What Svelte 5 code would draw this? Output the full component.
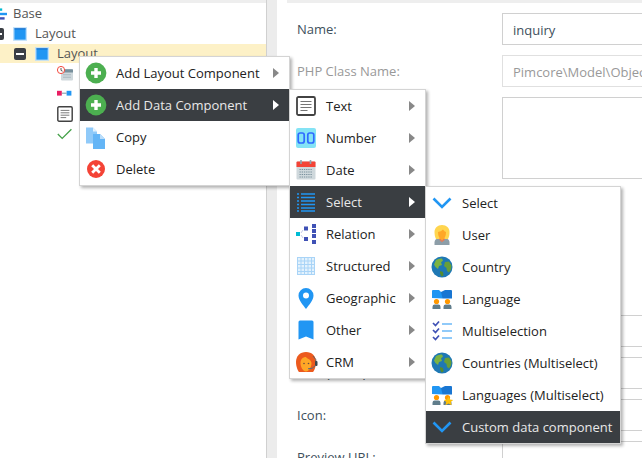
<script>
  const menu1 = [
    { icon: 'plus', label: 'Add Layout Component', arrow: true },
    { icon: 'plus', label: 'Add Data Component', arrow: true, active: true },
    { icon: 'copy', label: 'Copy' },
    { icon: 'delete', label: 'Delete' }
  ];
  const menu2 = [
    { icon: 'text', label: 'Text', arrow: true },
    { icon: 'number', label: 'Number', arrow: true },
    { icon: 'date', label: 'Date', arrow: true },
    { icon: 'list', label: 'Select', arrow: true, active: true },
    { icon: 'relation', label: 'Relation', arrow: true },
    { icon: 'grid', label: 'Structured', arrow: true },
    { icon: 'pin', label: 'Geographic', arrow: true },
    { icon: 'bookmark', label: 'Other', arrow: true },
    { icon: 'crm', label: 'CRM', arrow: true }
  ];
  const menu3 = [
    { icon: 'chevron', label: 'Select' },
    { icon: 'user', label: 'User' },
    { icon: 'globe', label: 'Country' },
    { icon: 'language', label: 'Language' },
    { icon: 'multi', label: 'Multiselection' },
    { icon: 'globe', label: 'Countries (Multiselect)' },
    { icon: 'languages', label: 'Languages (Multiselect)' },
    { icon: 'chevron', label: 'Custom data component', active: true }
  ];
  const tree = [
    { depth: 0, icon: 'base', label: 'Base' },
    { depth: 1, icon: 'square', label: 'Layout', open: true },
    { depth: 2, icon: 'square', label: 'Layout', open: true, selected: true },
    { depth: 3, icon: 'dateClock' },
    { depth: 3, icon: 'relationSmall' },
    { depth: 3, icon: 'text' },
    { depth: 3, icon: 'check' }
  ];
  const fields = [
    { label: '', narrow: true },
    { label: '', narrow: true },
    { label: '', narrow: true },
    { label: '' },
    { label: 'Title (Short):' },
    { label: 'Icon:' },
    { label: 'Preview URL:' }
  ];
</script>

{#snippet person(x, y, body, star)}
  <circle cx={x} cy={y} r="2.6" fill="#ff9800" />
  <path d="M{x - 4} {y + 7.5}v-2.2q0-2.2 2.2-2.2h3.6q2.2 0 2.2 2.2v2.2z" fill={body} />
  {#if star}
    <path d="M{x + 1} {y - 1}l1.5 3 3.2.4-2.4 2.2.7 3.2-3-1.7-3 1.7.7-3.2-2.4-2.2 3.2-.4z" fill="#ffc107" />
  {/if}
{/snippet}

{#snippet icon(name)}
  <svg class="ico" viewBox="0 0 20 20" width="20" height="20" aria-hidden="true">
    {#if name === 'plus'}
      <circle cx="10" cy="10" r="10.4" fill="#4caf50" />
      <path d="M10 5v10M5 10h10" stroke="#fff" stroke-width="3.4" />
    {:else if name === 'copy'}
      <path d="M0 .5h7l4 4v12H0z" fill="#90caf9" />
      <path d="M7 .5l4 4H7z" fill="#e3f2fd" />
      <path d="M7 7h7l5 5v10H7z" fill="#64b5f6" />
      <path d="M14 7l5 5h-5z" fill="#bbdefb" />
    {:else if name === 'delete'}
      <circle cx="10" cy="10" r="9" fill="#f44336" />
      <path d="M6.2 6.2l7.6 7.6M13.8 6.2l-7.6 7.6" stroke="#fff" stroke-width="2.8" />
    {:else if name === 'text'}
      <rect x="1" y="1" width="18" height="18" rx="1.5" fill="#fff" stroke="#424242" stroke-width="1.8" />
      <path d="M4.5 5.5h11M4.5 8.5h11M4.5 11.500h11M4.5 14.500h7" stroke="#757575" stroke-width="1.2" />
    {:else if name === 'number'}
      <rect x="0" y="0" width="20" height="20" rx="2" fill="#84e3f5" />
      <rect x="2.200" y="5" width="6" height="10" rx="2" fill="none" stroke="#2f6bff" stroke-width="1.700" />
      <rect x="11.800" y="5" width="6" height="10" rx="2" fill="none" stroke="#2f6bff" stroke-width="1.700" />
    {:else if name === 'date'}
      <rect x="0.5" y="1.5" width="19" height="18" rx="1" fill="#cfd8dc" />
      <path d="M.5 7V2.500q0-1 1-1h17q1 0 1 1V7z" fill="#f44336" />
      <path d="M5 0v4M14.500 0v4" stroke="#90a4ae" stroke-width="1.6" />
      <path d="M3.500 9.500h13M3.500 12h13M3.500 14.500h13M3.500 17h13" stroke="#78909c" stroke-width="1.2" stroke-dasharray="1.300 .9" />
    {:else if name === 'dateClock'}
      <rect x="5" y="4" width="15" height="14" rx="1" fill="#cfd8dc" />
      <path d="M5 8V5q0-1 1-1h13q1 0 1 1v3z" fill="#78909c" />
      <path d="M8 11h10M8 14h10" stroke="#90a4ae" stroke-width="1.300" stroke-dasharray="1.500 1" />
      <circle cx="5" cy="5" r="4.500" fill="#fff" stroke="#f44336" stroke-width="1.200" />
      <path d="M5 2.500V5.500l2 1" fill="none" stroke="#424242" stroke-width="1.100" />
    {:else if name === 'list'}
      <path d="M1 2h2M1 5.500h2M1 9h2M1 12.500h2M1 16h2M1 19h2" stroke="#2196f3" stroke-width="1.500" />
      <path d="M5 2h14M5 5.500h14M5 9h14M5 12.500h14M5 16h14M5 19h14" stroke="#2196f3" stroke-width="1.500" />
    {:else if name === 'relation'}
      <rect x="0" y="8" width="4" height="4" fill="#00bcd4" />
      <rect x="8" y="2.500" width="4" height="4" fill="#3f51b5" />
      <rect x="8" y="13" width="4" height="4" fill="#3f51b5" />
      <rect x="16" y="0" width="4" height="4" fill="#3f51b5" />
      <rect x="16" y="5" width="4" height="4" fill="#3f51b5" />
      <rect x="16" y="10" width="4" height="4" fill="#3f51b5" />
      <rect x="16" y="16" width="4" height="4" fill="#3f51b5" />
      <path d="M5 9l2-3M5 11l2 3" stroke="#c5cae9" stroke-width="1" />
    {:else if name === 'relationSmall'}
      <rect x="0" y="6" width="6" height="6" fill="#e91e63" />
      <rect x="12" y="6" width="6" height="6" fill="#2196f3" />
      <path d="M6 9h6" stroke="#78909c" stroke-width="1.200" />
    {:else if name === 'grid'}
      <rect x="1" y="1" width="18" height="18" fill="#e3f2fd" />
      <path d="M1.500 1v18M5 1v18M8.500 1v18M12 1v18M15.500 1v18M18.500 1v18M1 1.500h18M1 5h18M1 8.500h18M1 12h18M1 15.500h18M1 18.500h18" stroke="#a9d4f7" stroke-width="1" />
    {:else if name === 'pin'}
      <path d="M10 0a7.500 7.500 0 0 0-7.500 7.500C2.500 12 7 17 10 21c3-4 7.500-9 7.500-13.500A7.500 7.500 0 0 0 10 0z" fill="#2196f3" />
      <circle cx="10" cy="7.500" r="3" fill="#fff" />
    {:else if name === 'bookmark'}
      <path d="M4 0h12q1.500 0 1.500 1.500V19l-7.500-3-7.500 3V1.500Q2.500 0 4 0z" fill="#2196f3" transform="translate(0 .5)" />
    {:else if name === 'crm'}
      <path d="M10 0C4 0 0 4 0 10c0 5 2 9 3 10h14c1-1 3-5 3-10 0-6-4-10-10-10z" fill="#ec5a1e" />
      <path d="M4.500 11C4.500 7 7 5 10 5c1 2 5 2 5.500 6 0 4-2.500 8.500-5.500 8.500S4.500 15 4.500 11z" fill="#ffa726" />
      <circle cx="8" cy="11.500" r=".8" fill="#6d4c41" />
      <circle cx="12.500" cy="11.500" r=".8" fill="#6d4c41" />
      <path d="M17 4q4 3 3 8" fill="none" stroke="#616161" stroke-width="1" />
      <rect x="19" y="9" width="2.500" height="5" rx="1" fill="#37474f" />
      <path d="M19 14q-2 3-7 2.800" fill="none" stroke="#546e7a" stroke-width="1" />
    {:else if name === 'chevron'}
      <path d="M1.500 5.500l8.500 8.500 8.500-8.500" fill="none" stroke="#2196f3" stroke-width="2.600" />
    {:else if name === 'user'}
      <path d="M2.500 20v-2.500Q2.500 14 6 13.500h8q3.500.5 3.500 4V20z" fill="#8d9ea8" />
      <path d="M10 0C5.500 0 2.500 3 2.500 7c0 3 .5 5 1.500 7h12c1-2 1.500-4 1.500-7 0-4-3-7-7.500-7z" fill="#ffd54f" />
      <path d="M6 7q3-.500 5-2.500 1.500 2 3 2.500 0 6-4 8.500Q6 13 6 7z" fill="#ffa726" />
      <path d="M7.500 13l2.500 3 2.500-3v2l-2.500 2-2.500-2z" fill="#ff7043" />
    {:else if name === 'globe'}
      <circle cx="10" cy="10" r="10.500" fill="#1e78b4" />
      <path d="M4 3q3-2 6-1.500l1 2-2 2 1 2.500-3 1-1 3-2.500-2L2 7.500z" fill="#7cb342" />
      <path d="M13 5l4-.500 2.500 4-.5 4-2 3-2-1.500-.5-3-2.500-2z" fill="#689f38" />
      <path d="M8 14l3 1 .5 3.500-2 1-1.500-3z" fill="#558b2f" />
    {:else if name === 'language' || name === 'languages'}
      <path d="M0 9V2q0-1 1-1h6l2 2h2v7z" fill="#2196f3" />
      <path d="M9 3l4-2h6q1 0 1 1v8l-9 1z" fill="#1976d2" />
      <path d="M0 9.500h20v2.500H0z" fill="#fff" />
      {@render person(4.500, 12.500, '#607d8b', false)}
      {@render person(15.500, 12.500, '#607d8b', name === 'languages')}
    {:else if name === 'multi'}
      <path d="M1 2l2.500 2.500L7 .5M1 9l2.500 2.500L7 7.500M1 16l2.500 2.500L7 14.500" fill="none" stroke="#3f51b5" stroke-width="1.700" />
      <path d="M10 3h10M10 10h10M10 17h10" stroke="#90caf9" stroke-width="1.800" />
    {:else if name === 'base'}
      <path d="M3 3h11v3H3z" fill="#00bcd4" />
      <path d="M0 8.500h20v3H0z" fill="#2196f3" />
      <path d="M3 14h14v3H3z" fill="#3f51b5" />
    {:else if name === 'square'}
      <rect x="0" y="1.500" width="17.500" height="17" fill="#bbdefb" />
      <rect x="1.800" y="3" width="14" height="14" fill="#2196f3" />
      <rect x="1.800" y="3" width="14" height="1.200" fill="#1565c0" />
    {:else if name === 'check'}
      <path d="M1 10l5.500 5.500L18 4" fill="none" stroke="#43a047" stroke-width="1.600" />
    {/if}
  </svg>
{/snippet}

{#snippet menu(items, cls)}
  <div class="menu {cls}">
    {#each items as item}
      <div class="item" class:active={item.active}>
        {@render icon(item.icon)}
        <span class="label">{item.label}</span>
        {#if item.arrow}<span class="arrow"></span>{/if}
      </div>
    {/each}
  </div>
{/snippet}

<div class="page">
  <aside class="panel">
    <div class="strip"></div>
    <ul class="tree">
      {#each tree as node}
        <li class="node" class:selected={node.selected} style="padding-left: {node.depth * 22}px">
          <span class="expander" class:open={node.open}></span>
          <span class="node-icon">{@render icon(node.icon)}</span>
          {#if node.label}<span class="node-label">{node.label}</span>{/if}
        </li>
      {/each}
    </ul>
  </aside>
  <div class="splitter"></div>
  <main class="content">
    <div class="strip"></div>
    <form class="form">
      <div class="row">
        <span class="field-label">Name:</span>
        <div class="input">inquiry</div>
      </div>
      <div class="row disabled">
        <span class="field-label">PHP Class Name:</span>
        <div class="input">Pimcore\Model\Object\Inquiry</div>
      </div>
      <div class="row tall">
        <span class="field-label"></span>
        <div class="input"></div>
      </div>
      {#each fields as field}
        <div class="row">
          <span class="field-label">{field.label}</span>
          <div class="input" class:narrow={field.narrow}></div>
        </div>
      {/each}
    </form>
  </main>

  {@render menu(menu1, 'm1')}
  {@render menu(menu2, 'm2')}
  {@render menu(menu3, 'm3')}
</div>

<style>
  :global(body) {
    margin: 0;
    background: #fff;
  }
  .page {
    position: relative;
    display: flex;
    width: 642px;
    height: 458px;
    overflow: hidden;
    font-family: "Open Sans", sans-serif;
    font-size: 13px;
    color: #222;
  }
  .panel {
    flex: none;
    box-sizing: border-box;
    width: 267px;
    height: 458px;
    overflow: hidden;
    border-right: 1px solid #d0d0d0;
  }
  .strip {
    height: 3px;
    background: #eeeeee;
  }
  .tree {
    width: 296px;
    margin: 1px 0 0 -30px;
    padding: 0;
    list-style: none;
    color: #555;
  }
  .node {
    display: flex;
    align-items: center;
    height: 20px;
  }
  .selected {
    background: #fdf1c7;
    height: 19px;
    margin-bottom: 1px;
  }
  .expander {
    position: relative;
    flex: none;
    box-sizing: border-box;
    width: 12px;
    height: 12px;
    margin-right: 9px;
    border-radius: 2px;
  }
  .expander.open {
    background: #3b3f45;
  }
  .expander.open::after {
    content: "";
    position: absolute;
    left: 2px;
    right: 2px;
    top: 5px;
    height: 2px;
    background: #fff;
  }
  .node-icon {
    flex: none;
    width: 14px;
    height: 16px;
    margin-right: 8px;
  }
  .node-icon :global(svg) {
    display: block;
    width: 16px;
    height: 16px;
  }
  .node-label {
    margin-bottom: 2px;
    white-space: nowrap;
  }
  .splitter {
    flex: none;
    width: 10px;
    background: #ececec;
  }
  .content {
    flex: 1;
    min-width: 0;
    padding-left: 10px;
  }
  .form {
    display: flex;
    flex-direction: column;
    gap: 10px;
    padding: 10px 0 0 10px;
    color: #404f5c;
    width: 400px;
  }
  .row {
    display: grid;
    grid-template-columns: 205px 1fr;
    align-items: center;
    flex: none;
    height: 32px;
  }
  .row.tall {
    height: 82px;
  }
  .row.disabled {
    color: #999;
  }
  .input {
    box-sizing: border-box;
    height: 100%;
    padding-left: 10px;
    border: 1px solid #d0d0d0;
    line-height: 32px;
    white-space: nowrap;
    overflow: hidden;
  }
  .input.narrow {
    width: 110px;
  }
  .row.disabled .input {
    border-color: #e0e0e0;
  }
  .menu {
    position: absolute;
    background: #fff;
    border: 1px solid #d4d4d4;
    box-shadow: 2px 2px 3px rgba(0, 0, 0, 0.3);
  }
  .m1 {
    left: 79px;
    top: 56px;
    width: 209px;
  }
  .m2 {
    left: 289px;
    top: 89px;
    width: 135px;
  }
  .m3 {
    left: 425px;
    top: 186px;
    width: 194px;
  }
  .item {
    display: flex;
    align-items: center;
    gap: 10px;
    height: 32px;
    padding: 0 10px 0 6px;
    color: #222;
  }
  .item.active {
    background: #3a3e42;
    color: #e8e8e8;
  }
  .ico {
    flex: none;
    overflow: visible;
  }
  .label {
    flex: 1;
    white-space: nowrap;
  }
  .arrow {
    flex: none;
    width: 0;
    height: 0;
    border-left: 6px solid #888;
    border-top: 5px solid transparent;
    border-bottom: 5px solid transparent;
  }
  .item.active .arrow {
    border-left-color: #fff;
  }
</style>
